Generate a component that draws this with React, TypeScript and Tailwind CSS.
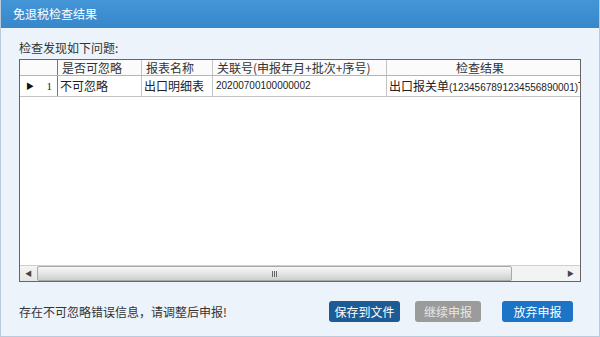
import React from "react";

const font = { fontFamily: '"Noto Sans CJK SC", "Liberation Sans", sans-serif' };

const cols = [
  { w: "w-[84px]", head: "是否可忽略", cell: "不可忽略" },
  { w: "w-[71px]", head: "报表名称", cell: "出口明细表" },
  { w: "w-[174px]", head: "关联号(申报年月+批次+序号)", cell: "20200700100000002" },
];

const App = () => {
  return (
    <div
      className="w-[600px] h-[337px] flex flex-col overflow-hidden bg-[#edf3fa] border-x border-b border-[#b9cbdd] text-[12px] text-[#222]"
      style={font}
    >
      {/* title bar */}
      <div className="h-[28px] shrink-0 flex items-center pl-[12px] bg-gradient-to-b from-[#4396d7] to-[#3787cb] text-white text-[12px]">
        免退税检查结果
      </div>

      <div className="flex-1 flex flex-col pl-[18px] pr-[18px]">
        <div className="pt-[12px] leading-[16px] h-[31px] text-[#333]">检查发现如下问题:</div>

        {/* grid */}
        <div className="h-[223px] border border-[#666] bg-white flex flex-col overflow-hidden">
          {/* header row */}
          <div className="h-[16px] flex border-b border-[#b5b5b5] leading-[15px] text-[#333] bg-[#fbfbfb]">
            <div className="w-[38px] shrink-0 border-r border-[#777]" />
            {cols.map((c) => (
              <div key={c.head} className={`${c.w} shrink-0 border-r border-[#c4c4c4] pl-[4px] whitespace-nowrap overflow-hidden`}>
                {c.head}
              </div>
            ))}
            <div className="w-[186px] shrink-0 text-center whitespace-nowrap">检查结果</div>
          </div>

          {/* data row */}
          <div className="h-[21px] flex border-b border-[#c4c4c4] leading-[20px]">
            <div className="w-[38px] shrink-0 border-r border-[#777] flex items-center justify-between pl-[6px] pr-[5px]">
              <span className="text-[8px] text-[#111]">▶</span>
              <span className="text-[11px]" style={{ fontFamily: '"Liberation Serif", serif' }}>1</span>
            </div>
            <div className="w-[84px] shrink-0 border-r border-[#c4c4c4] pl-[2px]">不可忽略</div>
            <div className="w-[71px] shrink-0 border-r border-[#c4c4c4] pl-[2px] whitespace-nowrap">出口明细表</div>
            <div
              className="w-[174px] shrink-0 border-r border-[#c4c4c4] pl-[3px] text-[10px]"
              style={{ fontFamily: '"Liberation Sans", sans-serif' }}
            >
              20200700100000002
            </div>
            <div className="flex-1 min-w-0 pl-[2px] whitespace-nowrap overflow-hidden">
              出口报关单
              <span className="text-[10px]" style={{ fontFamily: '"Liberation Sans", sans-serif' }}>
                (1234567891234556890001)
              </span>
              T
            </div>
          </div>

          <div className="flex-1" />

          {/* horizontal scrollbar */}
          <div className="h-[16px] flex border-t border-[#cfcfcf] bg-gradient-to-b from-[#f4f4f4] to-[#e6e6e6]">
            <div className="w-[17px] flex items-center justify-center text-[7px] text-[#444]">◀</div>
            <div className="w-[475px] rounded-[2px] border border-[#a9a9a9] bg-gradient-to-b from-[#f7f7f7] via-[#e4e4e4] to-[#cfcfcf] flex items-center justify-center">
              <div className="flex gap-[1px]">
                <span className="w-[1px] h-[6px] bg-[#666]" />
                <span className="w-[1px] h-[6px] bg-[#666]" />
                <span className="w-[1px] h-[6px] bg-[#666]" />
              </div>
            </div>
            <div className="flex-1 flex items-center justify-end pr-[6px] text-[7px] text-[#444] bg-[#f3f3f3]">▶</div>
          </div>
        </div>

        {/* footer */}
        <div className="flex items-center pt-[19px]">
          <div className="flex-1 leading-[16px] text-[#333] pt-[1px]">存在不可忽略错误信息，请调整后申报!</div>
          <div className="flex gap-[15px] pr-[8px]">
            <button className="w-[71px] h-[21px] rounded-[3px] bg-[#1d5b95] text-white text-[12px] leading-[21px]">保存到文件</button>
            <button className="w-[66px] h-[21px] rounded-[3px] bg-[#9b9b9b] text-[#e6e6e6] text-[12px] leading-[21px] mr-[6px]">继续申报</button>
            <button className="w-[71px] h-[21px] rounded-[3px] bg-[#1b74c5] text-white text-[12px] leading-[21px]">放弃申报</button>
          </div>
        </div>
      </div>
    </div>
  );
};

export default App;
